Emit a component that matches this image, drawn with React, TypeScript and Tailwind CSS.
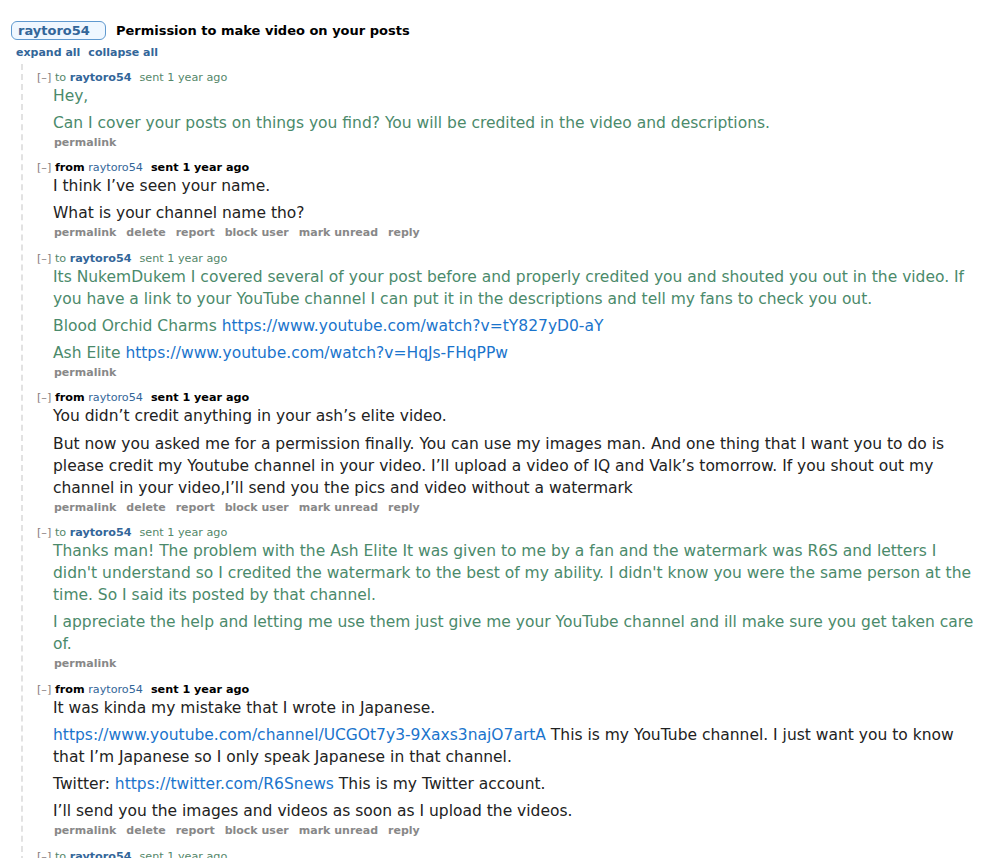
import React from 'react';

type Part = string | { href: string };
type Msg = {
  dir: 'to' | 'from';
  paras: Part[][];
};

const messages: Msg[] = [
  {
    dir: 'to',
    paras: [
      ['Hey,'],
      ['Can I cover your posts on things you find? You will be credited in the video and descriptions.'],
    ],
  },
  {
    dir: 'from',
    paras: [['I think I’ve seen your name.'], ['What is your channel name tho?']],
  },
  {
    dir: 'to',
    paras: [
      [
        'Its NukemDukem I covered several of your post before and properly credited you and shouted you out in the video. If you have a link to your YouTube channel I can put it in the descriptions and tell my fans to check you out.',
      ],
      ['Blood Orchid Charms ', { href: 'https://www.youtube.com/watch?v=tY827yD0-aY' }],
      ['Ash Elite ', { href: 'https://www.youtube.com/watch?v=HqJs-FHqPPw' }],
    ],
  },
  {
    dir: 'from',
    paras: [
      ['You didn’t credit anything in your ash’s elite video.'],
      [
        'But now you asked me for a permission finally. You can use my images man. And one thing that I want you to do is please credit my Youtube channel in your video. I’ll upload a video of IQ and Valk’s tomorrow. If you shout out my channel in your video,I’ll send you the pics and video without a watermark',
      ],
    ],
  },
  {
    dir: 'to',
    paras: [
      [
        "Thanks man! The problem with the Ash Elite It was given to me by a fan and the watermark was R6S and letters I didn't understand so I credited the watermark to the best of my ability. I didn't know you were the same person at the time. So I said its posted by that channel.",
      ],
      [
        'I appreciate the help and letting me use them just give me your YouTube channel and ill make sure you get taken care of.',
      ],
    ],
  },
  {
    dir: 'from',
    paras: [
      ['It was kinda my mistake that I wrote in Japanese.'],
      [
        { href: 'https://www.youtube.com/channel/UCGOt7y3-9Xaxs3najO7artA' },
        ' This is my YouTube channel. I just want you to know that I’m Japanese so I only speak Japanese in that channel.',
      ],
      ['Twitter: ', { href: 'https://twitter.com/R6Snews' }, ' This is my Twitter account.'],
      ['I’ll send you the images and videos as soon as I upload the videos.'],
    ],
  },
  {
    dir: 'to',
    paras: [['Sounds good! I will credit your channel in the video.']],
  },
];

const font = { fontFamily: '"DejaVu Sans", Verdana, sans-serif' };

function Tagline({ dir }: { dir: 'to' | 'from' }) {
  if (dir === 'to') {
    return (
      <div className="text-[11.2px] leading-[14px] text-[#55876a]">
        <span className="text-[#8a8080]">[–]</span> to{' '}
        <span className="font-bold text-[#336699]">raytoro54</span>
        <span className="ml-[8px]">sent 1 year ago</span>
      </div>
    );
  }
  return (
    <div className="text-[11.2px] leading-[14px] text-black">
      <span className="text-[#8a8080]">[–]</span> <span className="font-bold">from</span>{' '}
      <span className="text-[#336699]">raytoro54</span>
      <span className="ml-[8px] font-bold">sent 1 year ago</span>
    </div>
  );
}

function Buttons({ dir }: { dir: 'to' | 'from' }) {
  const items =
    dir === 'to' ? ['permalink'] : ['permalink', 'delete', 'report', 'block user', 'mark unread', 'reply'];
  return (
    <div className="mt-[2px] ml-[1px] flex gap-[10px] text-[11px] leading-[14px] font-bold text-[#888]">
      {items.map((b) => (
        <span key={b}>{b}</span>
      ))}
    </div>
  );
}

function Message({ msg }: { msg: Msg }) {
  const textColor = msg.dir === 'to' ? 'text-[#4b8a6b]' : 'text-[#222]';
  return (
    <div className="mb-[11.4px]">
      <Tagline dir={msg.dir} />
      <div className={`pl-[16px] pr-[16px] text-[15.5px] leading-[22px] ${textColor}`}>
        {msg.paras.map((p, i) => (
          <p key={i} className={i > 0 ? 'mt-[5.2px]' : ''}>
            {p.map((part, j) =>
              typeof part === 'string' ? (
                <span key={j}>{part}</span>
              ) : (
                <a key={j} href="#" className="text-[#1a74cc]">
                  {part.href}
                </a>
              )
            )}
          </p>
        ))}
        <Buttons dir={msg.dir} />
      </div>
    </div>
  );
}

export default function App() {
  return (
    <div className="min-h-screen bg-white pt-[21px] pl-[11px]" style={font}>
      <div className="flex items-center gap-[10px]">
        <span className="rounded-[6px] border border-[#5f99cf] bg-[#eff7ff] px-[6px] text-[13px] leading-[17px] font-bold text-[#336699]">
          raytoro54&nbsp;&nbsp;
        </span>
        <span className="text-[13px] font-bold text-black">Permission to make video on your posts</span>
      </div>
      <div className="mt-[5px] ml-[5px] flex gap-[8px] text-[11px] leading-[14px] font-bold text-[#336699]">
        <span>expand all</span>
        <span>collapse all</span>
      </div>
      <div className="mt-[4px] ml-[10px] border-l-2 border-dashed border-[#e2e2e2] pl-[14px] pt-[7px]">
        {messages.map((m, i) => (
          <Message key={i} msg={m} />
        ))}
      </div>
    </div>
  );
}
